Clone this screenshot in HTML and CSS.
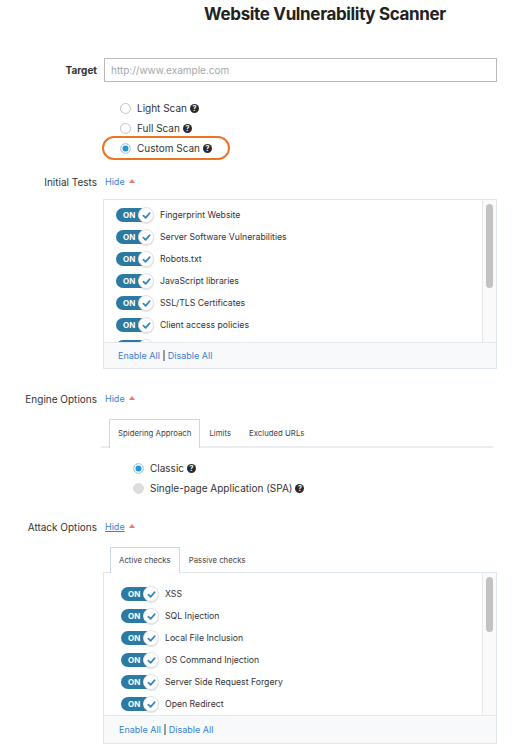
FILE: index.html
```html
<html>
<head>
    <title>Website Vulnerability Scanner</title>
    <link rel="stylesheet" href="styles.css">
</head>
<body>
    <h1 class="title">Website Vulnerability Scanner</h1>

    <div class="form">
        <div class="row row-target">
            <label class="label label-bold">Target</label>
            <input class="target-input" type="text" placeholder="http://www.example.com">
        </div>

        <div class="row">
            <div></div>
            <div class="scan-types">
                <div class="radio-row"><span class="radio"></span>Light Scan <span class="help">?</span></div>
                <div class="radio-row"><span class="radio"></span>Full Scan <span class="help">?</span></div>
                <div class="radio-row radio-row-hl"><span class="radio radio-on"></span>Custom Scan <span class="help">?</span></div>
            </div>
        </div>

        <div class="row row-section sec-initial">
            <div class="label">Initial Tests</div>
            <div><a class="hide-link">Hide</a><span class="caret"></span></div>
        </div>

        <div class="row">
            <div></div>
            <div class="box box-initial">
                <div class="box-body">
                    <ul class="checks">
                        <li><span class="toggle"><span class="pill">ON</span><span class="knob"><svg width="9" height="9" viewBox="0 0 10 10"><path d="M1.5 5.2 L4 7.6 L8.6 2.4" fill="none" stroke="#2d86c4" stroke-width="1.8" stroke-linecap="round" stroke-linejoin="round"/></svg></span></span>Fingerprint Website</li>
                        <li><span class="toggle"><span class="pill">ON</span><span class="knob"><svg width="9" height="9" viewBox="0 0 10 10"><path d="M1.5 5.2 L4 7.6 L8.6 2.4" fill="none" stroke="#2d86c4" stroke-width="1.8" stroke-linecap="round" stroke-linejoin="round"/></svg></span></span>Server Software Vulnerabilities</li>
                        <li><span class="toggle"><span class="pill">ON</span><span class="knob"><svg width="9" height="9" viewBox="0 0 10 10"><path d="M1.5 5.2 L4 7.6 L8.6 2.4" fill="none" stroke="#2d86c4" stroke-width="1.8" stroke-linecap="round" stroke-linejoin="round"/></svg></span></span>Robots.txt</li>
                        <li><span class="toggle"><span class="pill">ON</span><span class="knob"><svg width="9" height="9" viewBox="0 0 10 10"><path d="M1.5 5.2 L4 7.6 L8.6 2.4" fill="none" stroke="#2d86c4" stroke-width="1.8" stroke-linecap="round" stroke-linejoin="round"/></svg></span></span>JavaScript libraries</li>
                        <li><span class="toggle"><span class="pill">ON</span><span class="knob"><svg width="9" height="9" viewBox="0 0 10 10"><path d="M1.5 5.2 L4 7.6 L8.6 2.4" fill="none" stroke="#2d86c4" stroke-width="1.8" stroke-linecap="round" stroke-linejoin="round"/></svg></span></span>SSL/TLS Certificates</li>
                        <li><span class="toggle"><span class="pill">ON</span><span class="knob"><svg width="9" height="9" viewBox="0 0 10 10"><path d="M1.5 5.2 L4 7.6 L8.6 2.4" fill="none" stroke="#2d86c4" stroke-width="1.8" stroke-linecap="round" stroke-linejoin="round"/></svg></span></span>Client access policies</li>
                        <li><span class="toggle"><span class="pill"></span><span class="knob"><svg width="9" height="9" viewBox="0 0 10 10"><path d="M1.5 5.2 L4 7.6 L8.6 2.4" fill="none" stroke="#2d86c4" stroke-width="1.8" stroke-linecap="round" stroke-linejoin="round"/></svg></span></span></li>
                    </ul>
                    <div class="scrollbar"><div class="thumb"></div></div>
                </div>
                <div class="box-footer"><a>Enable All</a><span class="sep"></span><a>Disable All</a></div>
            </div>
        </div>

        <div class="row row-section sec-engine">
            <div class="label">Engine Options</div>
            <div><a class="hide-link">Hide</a><span class="caret"></span></div>
        </div>

        <div class="row">
            <div></div>
            <div>
                <ul class="tabs tabs-engine">
                    <li class="tab tab-active">Spidering Approach</li>
                    <li class="tab">Limits</li>
                    <li class="tab">Excluded URLs</li>
                </ul>
                <div class="spider-types">
                    <div class="radio-row"><span class="radio radio-on"></span>Classic <span class="help">?</span></div>
                    <div class="radio-row"><span class="radio radio-off"></span>Single-page Application (SPA) <span class="help">?</span></div>
                </div>
            </div>
        </div>

        <div class="row row-section sec-attack">
            <div class="label">Attack Options</div>
            <div><a class="hide-link hide-link-u">Hide</a><span class="caret"></span></div>
        </div>

        <div class="row">
            <div></div>
            <div>
                <ul class="tabs tabs-attack">
                    <li class="tab tab-active">Active checks</li>
                    <li class="tab">Passive checks</li>
                </ul>
                <div class="box box-attack">
                    <div class="box-body">
                        <ul class="checks">
                            <li><span class="toggle"><span class="pill">ON</span><span class="knob"><svg width="9" height="9" viewBox="0 0 10 10"><path d="M1.5 5.2 L4 7.6 L8.6 2.4" fill="none" stroke="#2d86c4" stroke-width="1.8" stroke-linecap="round" stroke-linejoin="round"/></svg></span></span>XSS</li>
                            <li><span class="toggle"><span class="pill">ON</span><span class="knob"><svg width="9" height="9" viewBox="0 0 10 10"><path d="M1.5 5.2 L4 7.6 L8.6 2.4" fill="none" stroke="#2d86c4" stroke-width="1.8" stroke-linecap="round" stroke-linejoin="round"/></svg></span></span>SQL Injection</li>
                            <li><span class="toggle"><span class="pill">ON</span><span class="knob"><svg width="9" height="9" viewBox="0 0 10 10"><path d="M1.5 5.2 L4 7.6 L8.6 2.4" fill="none" stroke="#2d86c4" stroke-width="1.8" stroke-linecap="round" stroke-linejoin="round"/></svg></span></span>Local File Inclusion</li>
                            <li><span class="toggle"><span class="pill">ON</span><span class="knob"><svg width="9" height="9" viewBox="0 0 10 10"><path d="M1.5 5.2 L4 7.6 L8.6 2.4" fill="none" stroke="#2d86c4" stroke-width="1.8" stroke-linecap="round" stroke-linejoin="round"/></svg></span></span>OS Command Injection</li>
                            <li><span class="toggle"><span class="pill">ON</span><span class="knob"><svg width="9" height="9" viewBox="0 0 10 10"><path d="M1.5 5.2 L4 7.6 L8.6 2.4" fill="none" stroke="#2d86c4" stroke-width="1.8" stroke-linecap="round" stroke-linejoin="round"/></svg></span></span>Server Side Request Forgery</li>
                            <li><span class="toggle"><span class="pill">ON</span><span class="knob"><svg width="9" height="9" viewBox="0 0 10 10"><path d="M1.5 5.2 L4 7.6 L8.6 2.4" fill="none" stroke="#2d86c4" stroke-width="1.8" stroke-linecap="round" stroke-linejoin="round"/></svg></span></span>Open Redirect</li>
                        </ul>
                        <div class="scrollbar"><div class="thumb thumb-short"></div></div>
                    </div>
                    <div class="box-footer"><a>Enable All</a><span class="sep"></span><a>Disable All</a></div>
                </div>
            </div>
        </div>
    </div>
</body>
</html>
```

FILE: styles.css
```css
body {
    margin: 0;
    font-family: Inter, "Noto Sans", sans-serif;
    font-size: 9px;
    color: #333;
    background: #fff;
}

.title {
    margin: 0;
    padding: 4px 0 0 122px;
    font-size: 17px;
    line-height: 20px;
    text-align: center;
    color: #222;
    letter-spacing: -0.35px;
}

.form {
    padding-right: 31px;
}

.row {
    display: grid;
    grid-template-columns: 97px 1fr;
    column-gap: 6px;
}

.label {
    text-align: right;
    font-size: 10px;
    line-height: 14px;
    color: #333;
}
.label-bold {
    font-weight: 700;
    line-height: 24px;
}

.row-target {
    margin-top: 34px;
}
.target-input {
    height: 24px;
    box-sizing: border-box;
    margin-left: 1px;
    border: 1px solid #b9b9b9;
    padding: 0 6px;
    font-family: inherit;
    font-size: 10px;
    color: #333;
}
.target-input::placeholder {
    color: #a3a7ad;
}

/* radios */
.scan-types {
    margin-top: 16px;
    padding-left: 17px;
}
.radio-row {
    display: flex;
    align-items: center;
    height: 20px;
    font-size: 10px;
    color: #333;
}
.radio-row-hl {
    align-self: flex-start;
    width: max-content;
    margin: -2px 0 -2px -18px;
    padding: 0 16px;
    border: 2px solid #ec7423;
    border-radius: 12px;
}
.radio {
    width: 11px;
    height: 11px;
    box-sizing: border-box;
    border: 1px solid #c4c4c4;
    border-radius: 50%;
    background: #fff;
    margin-right: 6px;
}
.radio-on {
    background: #1f97d9;
    border-color: #c9d6e0;
    box-shadow: inset 0 0 0 1.5px #fff;
}
.radio-off {
    background: #dcdcdc;
    border-color: #dcdcdc;
}
.help {
    display: inline-flex;
    align-items: center;
    justify-content: center;
    width: 9px;
    height: 9px;
    margin-left: 3px;
    border-radius: 50%;
    background: #2b2b2b;
    color: #fff;
    font-size: 7px;
    font-weight: 700;
    line-height: 1;
}

/* section headers */
.row-section {
    line-height: 14px;
}
.sec-initial { margin-top: 17px; }
.sec-engine { margin-top: 23px; }
.sec-attack { margin-top: 22px; }
.hide-link {
    margin-left: 2px;
    color: #3b7fd0;
    font-size: 9px;
    cursor: pointer;
}
.hide-link-u {
    text-decoration: underline;
}
.caret {
    display: inline-block;
    margin-left: 4px;
    vertical-align: 2px;
    border-left: 3px solid transparent;
    border-right: 3px solid transparent;
    border-bottom: 4px solid #ec7a6a;
}

/* check boxes */
.box {
    border: 1px solid #dfe6ee;
    background: #fff;
}
.box-initial {
    margin-top: 10px;
}
.box-body {
    display: flex;
    height: 142px;
    overflow: hidden;
}
.checks {
    flex: 1;
    margin: 0;
    padding: 4px 0 0 12px;
    list-style: none;
}
.box-attack .checks {
    padding: 10px 0 0 17px;
}
.checks li {
    display: flex;
    align-items: center;
    height: 22px;
    font-size: 8.7px;
    color: #333;
}
.toggle {
    display: inline-flex;
    align-items: center;
    margin-right: 6px;
}
.pill {
    width: 32px;
    height: 14px;
    box-sizing: border-box;
    padding-left: 7px;
    border-radius: 7px;
    background: #2b7aa3;
    color: #fff;
    font-size: 8px;
    font-weight: 700;
    line-height: 14px;
}
.knob {
    display: inline-flex;
    align-items: center;
    justify-content: center;
    width: 16px;
    height: 16px;
    box-sizing: border-box;
    margin-left: -10px;
    border-radius: 50%;
    background: #fff;
    border: 1px solid #dde3e8;
    box-shadow: 0 1px 1px rgba(0, 0, 0, 0.12);
}
.scrollbar {
    width: 13px;
    border-left: 1px solid #e8e8e8;
    background: #fafafa;
}
.thumb {
    width: 7px;
    height: 84px;
    margin: 4px auto 0;
    border-radius: 4px;
    background: #c2c2c2;
}
.thumb-short {
    height: 55px;
}
.box-footer {
    display: flex;
    align-items: center;
    height: 25px;
    padding-left: 14px;
    border-top: 1px solid #e3e9ef;
    background: #f7f9fb;
    font-size: 9px;
}
.box-attack .box-footer {
    height: 27px;
    padding-left: 15px;
}
.box-footer a {
    color: #3b7fd0;
    cursor: pointer;
}
.sep {
    width: 2px;
    height: 11px;
    margin: 0 3px;
    background: #9a9a9a;
}

/* tabs */
.tabs {
    display: flex;
    margin: 0;
    padding: 0 0 0 8px;
    list-style: none;
}
.tabs-engine {
    margin: 13px 4px 0 -2px;
    border-bottom: 2px solid #e9edf1;
}
.tabs-attack {
    margin: 13px 0 -1px 0;
    padding-left: 7px;
    position: relative;
}
.tab {
    padding: 0 8px;
    height: 26px;
    line-height: 26px;
    font-size: 7.8px;
    color: #444;
    border: 1px solid transparent;
    border-bottom: none;
}
.tab-active {
    border-color: #c9d9e8;
    background: #fff;
}
.tabs-engine .tab-active {
    margin-bottom: -2px;
    height: 28px;
}
.tabs-attack .tab {
    height: 25px;
    line-height: 25px;
}

.spider-types {
    margin-top: 10px;
    padding-left: 30px;
}
```
